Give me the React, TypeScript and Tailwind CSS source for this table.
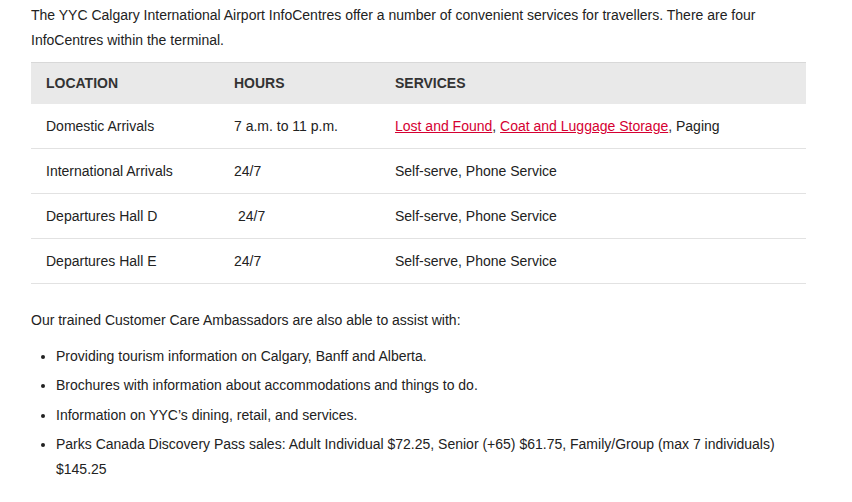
const rows = [
  { location: "Domestic Arrivals", hours: "7 a.m. to 11 p.m.", links: true },
  { location: "International Arrivals", hours: "24/7" },
  { location: "Departures Hall D", hours: "24/7", indent: true },
  { location: "Departures Hall E", hours: "24/7" },
];

const items = [
  "Providing tourism information on Calgary, Banff and Alberta.",
  "Brochures with information about accommodations and things to do.",
  "Information on YYC’s dining, retail, and services.",
  "Parks Canada Discovery Pass sales: Adult Individual $72.25, Senior (+65) $61.75, Family/Group (max 7 individuals) $145.25",
];

export default function App() {
  return (
    <div className="min-h-screen bg-white font-['Liberation_Sans',Arial,sans-serif] text-[14px] leading-[25px] text-[#222]">
      <div className="w-[775px] ml-[31px] pt-[3px]">
        <p>
          The YYC Calgary International Airport InfoCentres offer a number of convenient services for travellers. There are four
          InfoCentres within the terminal.
        </p>

        <table className="w-full mt-[9px] border-collapse text-left">
          <colgroup>
            <col className="w-[188px]" />
            <col className="w-[161px]" />
            <col />
          </colgroup>
          <thead>
            <tr className="bg-[#e9e9e9] border-t border-[#d8d8d8] h-[41px]">
              <th className="pl-[15px] font-bold text-[#333] uppercase">Location</th>
              <th className="pl-[15px] font-bold text-[#333] uppercase">Hours</th>
              <th className="pl-[15px] font-bold text-[#333] uppercase">Services</th>
            </tr>
          </thead>
          <tbody>
            {rows.map((row, idx) => (
              <tr key={idx} className="h-[45px] border-b border-[#e2e2e2]">
                <td className={idx === 0 ? "pl-[15px] pt-[2px]" : "pl-[15px]"}>{row.location}</td>
                <td className={(row.indent ? "pl-[19px]" : "pl-[15px]") + (idx === 0 ? " pt-[2px]" : "")}>{row.hours}</td>
                <td className={idx === 0 ? "pl-[15px] pt-[2px]" : "pl-[15px]"}>
                  {row.links ? (
                    <>
                      <a href="#" className="text-[#d50032] underline">Lost and Found</a>,{" "}
                      <a href="#" className="text-[#d50032] underline">Coat and Luggage Storage</a>, Paging
                    </>
                  ) : (
                    "Self-serve, Phone Service"
                  )}
                </td>
              </tr>
            ))}
          </tbody>
        </table>

        <p className="mt-[24px]">Our trained Customer Care Ambassadors are also able to assist with:</p>

        <ul className="mt-[11px] list-disc pl-[25px]">
          {items.map((item, idx) => (
            <li key={idx} className="mb-[4.3px]">
              {item}
            </li>
          ))}
        </ul>
      </div>
    </div>
  );
}
